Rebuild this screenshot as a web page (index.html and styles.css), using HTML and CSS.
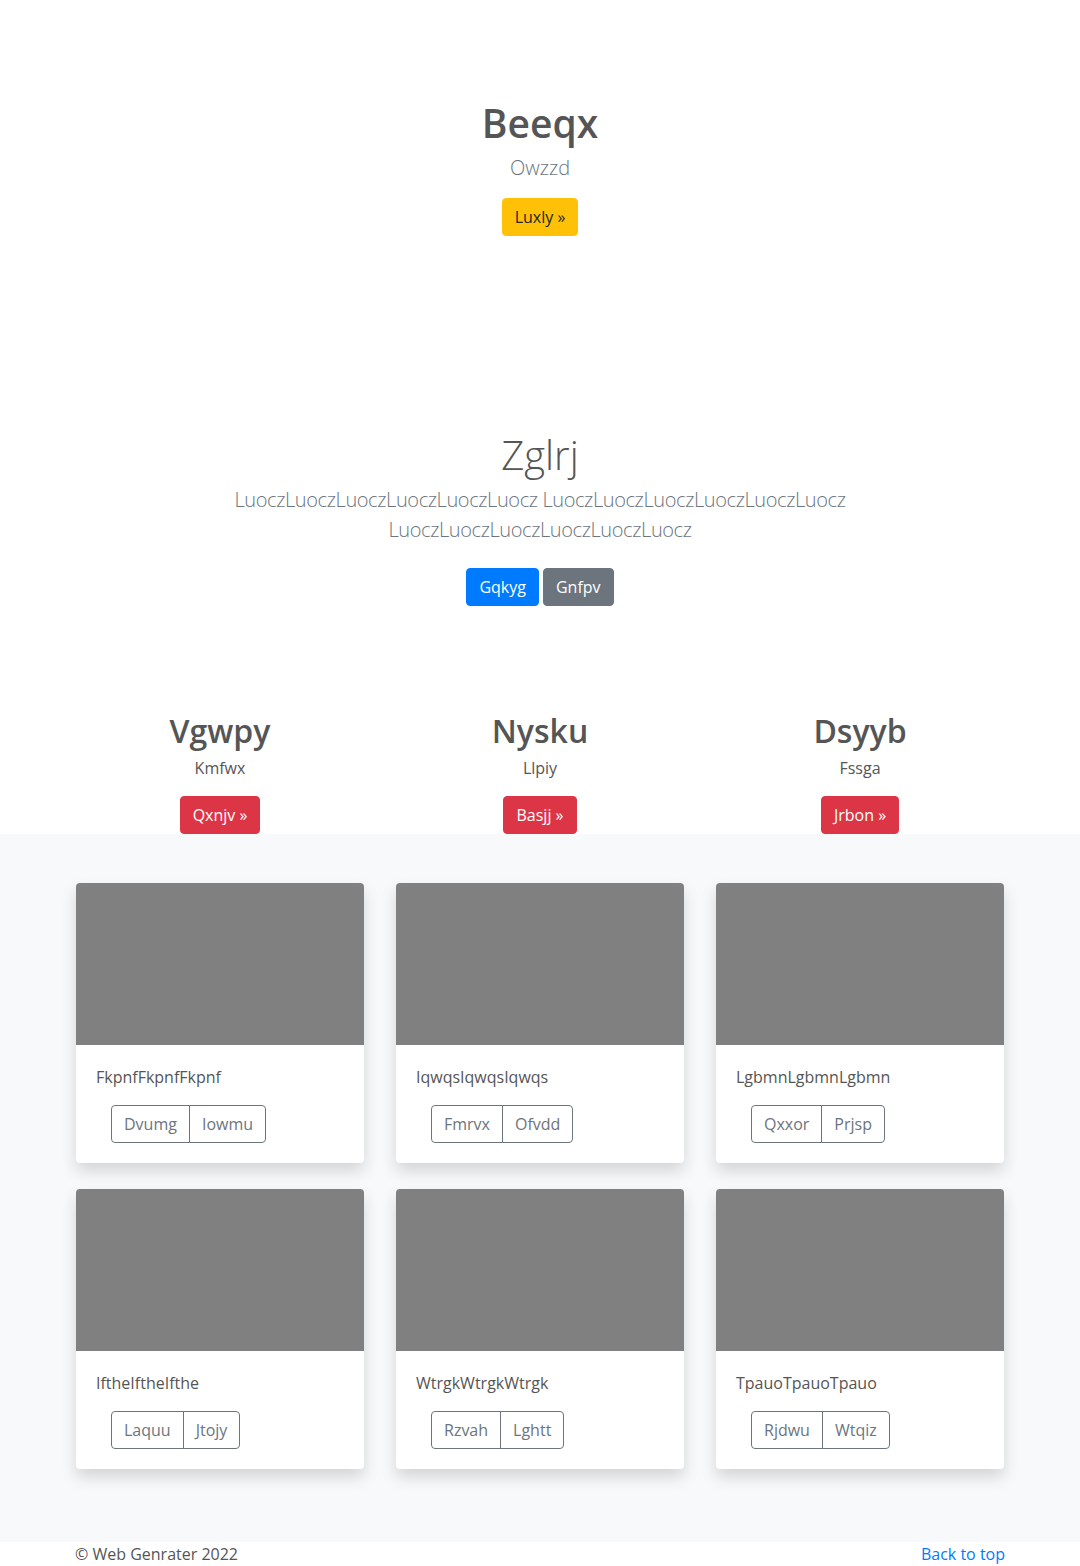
FILE: index.html
```html
<!DOCTYPE html>
<html lang="en">
<head>
<meta charset="utf-8">
<title>Beeqx</title>
<link rel="stylesheet" href="styles.css">
</head>
<body>
<header class="hero">
  <h1 class="hero-title">Beeqx</h1>
  <p class="hero-sub">Owzzd</p>
  <a class="btn btn-warning" href="#">Luxly &raquo;</a>
</header>

<section class="intro">
  <h1 class="intro-title">Zglrj</h1>
  <p class="lead">LuoczLuoczLuoczLuoczLuoczLuocz LuoczLuoczLuoczLuoczLuoczLuocz LuoczLuoczLuoczLuoczLuoczLuocz</p>
  <div class="intro-actions">
    <a class="btn btn-primary" href="#">Gqkyg</a>
    <a class="btn btn-secondary" href="#">Gnfpv</a>
  </div>
</section>

<section class="features">
  <div class="feature">
    <h2 class="feature-title">Vgwpy</h2>
    <p class="feature-text">Kmfwx</p>
    <a class="btn btn-danger" href="#">Qxnjv &raquo;</a>
  </div>
  <div class="feature">
    <h2 class="feature-title">Nysku</h2>
    <p class="feature-text">Llpiy</p>
    <a class="btn btn-danger" href="#">Basjj &raquo;</a>
  </div>
  <div class="feature">
    <h2 class="feature-title">Dsyyb</h2>
    <p class="feature-text">Fssga</p>
    <a class="btn btn-danger" href="#">Jrbon &raquo;</a>
  </div>
</section>

<section class="album">
  <div class="album-grid">
    <div class="card">
      <div class="card-img"></div>
      <div class="card-body">
        <p class="card-text">FkpnfFkpnfFkpnf</p>
        <div class="btn-group"><button class="btn-outline">Dvumg</button><button class="btn-outline">Iowmu</button></div>
      </div>
    </div>
    <div class="card">
      <div class="card-img"></div>
      <div class="card-body">
        <p class="card-text">IqwqsIqwqsIqwqs</p>
        <div class="btn-group"><button class="btn-outline">Fmrvx</button><button class="btn-outline">Ofvdd</button></div>
      </div>
    </div>
    <div class="card">
      <div class="card-img"></div>
      <div class="card-body">
        <p class="card-text">LgbmnLgbmnLgbmn</p>
        <div class="btn-group"><button class="btn-outline">Qxxor</button><button class="btn-outline">Prjsp</button></div>
      </div>
    </div>
    <div class="card">
      <div class="card-img"></div>
      <div class="card-body">
        <p class="card-text">IftheIftheIfthe</p>
        <div class="btn-group"><button class="btn-outline">Laquu</button><button class="btn-outline">Jtojy</button></div>
      </div>
    </div>
    <div class="card">
      <div class="card-img"></div>
      <div class="card-body">
        <p class="card-text">WtrgkWtrgkWtrgk</p>
        <div class="btn-group"><button class="btn-outline">Rzvah</button><button class="btn-outline">Lghtt</button></div>
      </div>
    </div>
    <div class="card">
      <div class="card-img"></div>
      <div class="card-body">
        <p class="card-text">TpauoTpauoTpauo</p>
        <div class="btn-group"><button class="btn-outline">Rjdwu</button><button class="btn-outline">Wtqiz</button></div>
      </div>
    </div>
  </div>
</section>

<footer class="footer">
  <span class="copy">&copy; Web Genrater 2022</span>
  <a class="back" href="#">Back to top</a>
</footer>
</body>
</html>
```

FILE: styles.css
```css
* { box-sizing: border-box; }

html, body {
  margin: 0;
  padding: 0;
}

body {
  font-family: "Segoe UI", "Open Sans", "Noto Sans", sans-serif;
  font-size: 16px;
  line-height: 1.5;
  color: #555;
  background: #fff;
}

a { text-decoration: none; }

.btn {
  display: inline-block;
  font-size: 16px;
  line-height: 24px;
  padding: 6px 12px;
  border: 1px solid transparent;
  border-radius: 4px;
  color: #fff;
  vertical-align: middle;
}

.btn-warning { background: #ffc107; border-color: #ffc107; color: #212529; }
.btn-primary { background: #007bff; border-color: #007bff; }
.btn-secondary { background: #6c757d; border-color: #6c757d; }
.btn-danger { background: #dc3545; border-color: #dc3545; }

/* hero */
.hero {
  padding-top: 99px;
  text-align: center;
}

.hero-title {
  margin: 0 0 8px;
  font-size: 39px;
  line-height: 48px;
  font-weight: 600;
  color: #555;
}

.hero-sub {
  margin: 0 0 17px;
  font-size: 20px;
  line-height: 26px;
  font-weight: 300;
  color: #6c757d;
}

/* intro */
.intro {
  padding-top: 195px;
  text-align: center;
}

.intro-title {
  margin: 0 0 6px;
  font-size: 40px;
  line-height: 48px;
  font-weight: 300;
  color: #555;
}

.lead {
  max-width: 720px;
  margin: 0 auto 23px;
  font-size: 20px;
  line-height: 30px;
  font-weight: 300;
  letter-spacing: -0.4px;
  color: #6c757d;
}

.intro-actions {
  display: flex;
  justify-content: center;
  gap: 4px;
}

/* features */
.features {
  width: 960px;
  margin: 0 auto;
  padding-top: 105px;
  display: grid;
  grid-template-columns: repeat(3, 1fr);
  text-align: center;
}

.feature-title {
  margin: 0 0 5px;
  font-size: 32px;
  line-height: 40px;
  font-weight: 600;
  color: #555;
}

.feature-text {
  margin: 0 0 16px;
  font-size: 16px;
  line-height: 24px;
}

/* album */
.album {
  background: #f8f9fa;
  padding: 49px 0 73px;
}

.album-grid {
  width: 928px;
  margin: 0 auto;
  display: grid;
  grid-template-columns: repeat(3, 288px);
  column-gap: 32px;
  row-gap: 26px;
}

.card {
  background: #fff;
  border-radius: 4px;
  overflow: hidden;
  box-shadow: 0 8px 16px rgba(0, 0, 0, 0.15);
}

.card-img {
  height: 162px;
  background: #808080;
}

.card-body {
  padding: 20px;
}

.card-text {
  margin: 0 0 16px;
  font-size: 16px;
  line-height: 24px;
  color: #555;
}

.btn-group {
  display: inline-flex;
  margin-left: 15px;
}

.btn-outline {
  font-family: inherit;
  font-size: 16px;
  line-height: 24px;
  padding: 6px 12px;
  background: transparent;
  color: #6c757d;
  border: 1px solid #6c757d;
  margin: 0;
}

.btn-outline:first-child {
  border-radius: 4px 0 0 4px;
}

.btn-outline:last-child {
  border-radius: 0 4px 4px 0;
  margin-left: -1px;
}

/* footer */
.footer {
  width: 930px;
  margin: 0 auto;
  display: flex;
  justify-content: space-between;
  padding: 0 0 48px;
  font-size: 16px;
  line-height: 24px;
}

.copy { color: #555; }
.back { color: #007bff; }
```
